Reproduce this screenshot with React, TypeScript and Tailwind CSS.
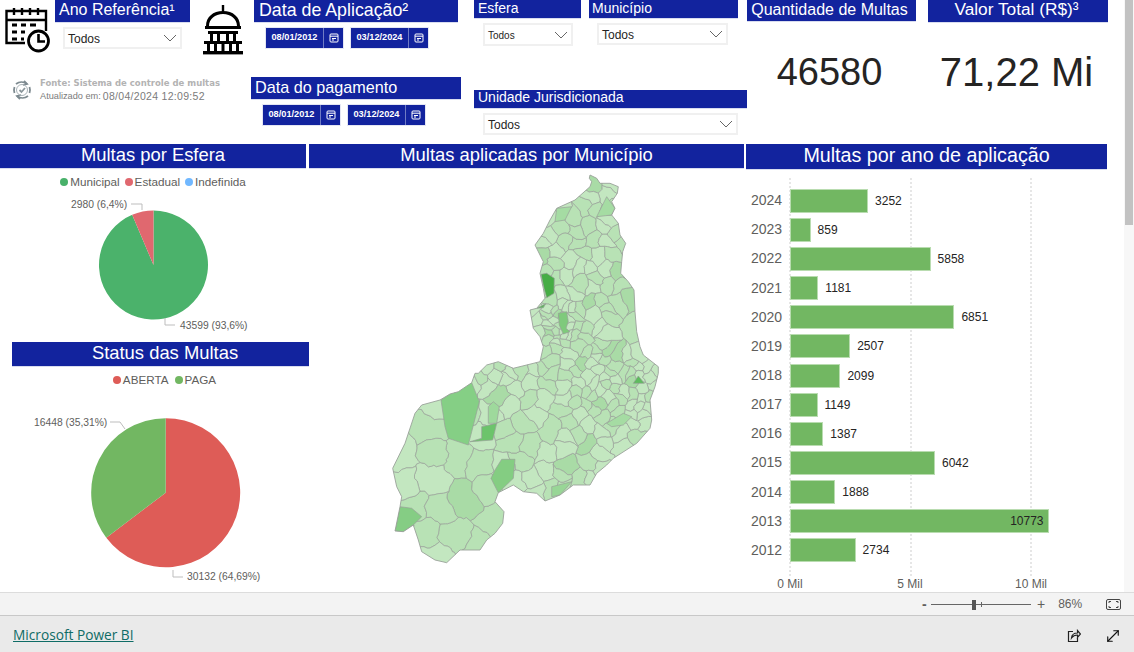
import { MoveDiagonal } from "lucide-react";

type Pt = [number, number];

const years = [
  [2024, 3252], [2023, 859], [2022, 5858], [2021, 1181], [2020, 6851], [2019, 2507], [2018, 2099],
  [2017, 1149], [2016, 1387], [2015, 6042], [2014, 1888], [2013, 10773], [2012, 2734],
];

// map outline traced from the picture, in two crops at 3x
const z4 = (p: number[][]): Pt[] => p.map(([x, y]) => [380 + x / 3, 165 + y / 3]);
const z5 = (p: number[][]): Pt[] => p.map(([x, y]) => [380 + x / 3, 370 + y / 3]);

const outline: Pt[] = [
  ...z4([[630, 30], [650, 40], [660, 55], [690, 55], [715, 65], [712, 85], [695, 110], [705, 130], [695, 150], [715, 175], [720, 210], [737, 235], [728, 260], [725, 290], [722, 325], [745, 350], [762, 375], [765, 440], [770, 500], [780, 545], [790, 570], [835, 605]]),
  ...z5([[835, 10], [825, 50], [810, 90], [815, 150], [810, 175], [770, 220], [700, 265], [680, 285], [650, 310], [630, 345], [580, 345], [540, 375], [495, 393], [470, 370], [430, 365], [400, 345], [355, 368], [345, 395], [372, 425], [368, 460], [345, 490], [320, 510], [300, 540], [240, 540], [200, 578], [165, 570], [125, 545], [115, 510], [100, 465], [70, 485], [45, 483], [60, 410], [65, 380], [50, 350], [38, 295], [75, 220], [105, 130], [125, 105], [180, 90], [210, 72], [235, 65], [275, 38], [285, 10]]),
  ...z4([[295, 625], [320, 600], [355, 590], [400, 610], [480, 590], [490, 545], [480, 515], [460, 490], [450, 435], [470, 430], [495, 400], [490, 370], [480, 325], [490, 290], [465, 240], [490, 205], [510, 165], [530, 130], [585, 105], [630, 65], [635, 50], [628, 40]]),
];

const highlights: { color: string; pts: Pt[] }[] = [
  { color: "#46ad45", pts: z4([[483, 328], [500, 325], [523, 340], [522, 385], [500, 398], [492, 370]]) },
  { color: "#5cb75b", pts: z4([[470, 430], [497, 416], [490, 428]]) },
  { color: "#7fca7c", pts: z4([[535, 445], [560, 440], [565, 470], [558, 490], [570, 500], [550, 507], [538, 480]]) },
  { color: "#a5dca3", pts: z4([[650, 155], [680, 95], [705, 130], [695, 150]]) },
  { color: "#a5dca3", pts: z4([[530, 130], [575, 125], [555, 165], [525, 170]]) },
  { color: "#85cf85", pts: z5([[183, 90], [210, 72], [275, 38], [298, 95], [265, 225], [205, 205], [195, 170]]) },
  { color: "#6cc46b", pts: z5([[305, 170], [350, 160], [338, 210], [270, 215], [305, 205]]) },
  { color: "#84cd82", pts: z5([[345, 300], [365, 268], [405, 268], [400, 325], [355, 368], [333, 325]]) },
  { color: "#85cd84", pts: z5([[60, 410], [95, 415], [125, 440], [100, 465], [70, 485], [45, 483]]) },
  { color: "#5fbc5f", pts: z5([[760, 40], [775, 18], [793, 40]]) },
  { color: "#9ed99c", pts: z5([[325, 110], [340, 95], [358, 110], [350, 160], [325, 160]]) },
  { color: "#a5dca3", pts: z5([[680, 160], [730, 130], [755, 140], [730, 165], [695, 170]]) },
  { color: "#98d696", pts: z5([[515, 350], [575, 335], [540, 375], [515, 380]]) },
];

function rng(seed: number) {
  return () => {
    seed = (seed + 0x6d2b79f5) | 0;
    let t = Math.imul(seed ^ (seed >>> 15), 1 | seed);
    t = (t + Math.imul(t ^ (t >>> 7), 61 | t)) ^ t;
    return ((t ^ (t >>> 14)) >>> 0) / 4294967296;
  };
}

function inside([x, y]: Pt, poly: Pt[]) {
  let hit = false;
  for (let i = 0, j = poly.length - 1; i < poly.length; j = i++) {
    const [xi, yi] = poly[i];
    const [xj, yj] = poly[j];
    if (yi > y !== yj > y && x < ((xj - xi) * (y - yi)) / (yj - yi) + xi) hit = !hit;
  }
  return hit;
}

// how far apart the municipalities sit in each part of the state
function spacing(x: number, y: number) {
  if (x > 545 && x < 575 && y > 305 && y < 345) return 5;
  if (x > 590 && y > 355 && y < 415) return 7;
  if (x < 500 && y > 385) return 24;
  if (x < 560 && y > 385) return 14;
  if (y < 300) return 10.5;
  if (x > 610 && y < 350) return 19;
  if (y > 415) return 11;
  return 9;
}

function clip(poly: Pt[], a: Pt, b: Pt) {
  const out: Pt[] = [];
  const d = (p: Pt) => (p[0] - a[0]) ** 2 + (p[1] - a[1]) ** 2 - (p[0] - b[0]) ** 2 - (p[1] - b[1]) ** 2;
  for (let i = 0; i < poly.length; i++) {
    const p = poly[i];
    const q = poly[(i + 1) % poly.length];
    const dp = d(p);
    const dq = d(q);
    if (dp <= 0) out.push(p);
    if (dp < 0 !== dq < 0) {
      const t = dp / (dp - dq);
      out.push([p[0] + (q[0] - p[0]) * t, p[1] + (q[1] - p[1]) * t]);
    }
  }
  return out;
}

// bends the straight cell edges so they read as borders; neighbours stay in step
function warp([x, y]: Pt): Pt {
  return [
    x + 1.8 * Math.sin(y * 0.21 + x * 0.07) + 1.1 * Math.sin(y * 0.53 - x * 0.31),
    y + 1.8 * Math.sin(x * 0.19 - y * 0.09) + 1.1 * Math.sin(x * 0.47 + y * 0.37),
  ];
}

function bend(poly: Pt[]) {
  const out: Pt[] = [];
  poly.forEach((p, i) => {
    const q = poly[(i + 1) % poly.length];
    const steps = Math.max(1, Math.round(Math.hypot(q[0] - p[0], q[1] - p[1]) / 4));
    for (let s = 0; s < steps; s++) {
      out.push(warp([p[0] + ((q[0] - p[0]) * s) / steps, p[1] + ((q[1] - p[1]) * s) / steps]));
    }
  });
  return out;
}

function buildCells() {
  const r = rng(41);
  const seeds: Pt[] = [];
  for (let i = 0; i < 9000; i++) {
    const p: Pt = [385 + r() * 280, 170 + r() * 400];
    if (!inside(p, outline)) continue;
    const min = spacing(p[0], p[1]);
    if (seeds.every((s) => Math.hypot(s[0] - p[0], s[1] - p[1]) > min)) seeds.push(p);
  }
  const box: Pt[] = [[380, 165], [680, 165], [680, 590], [380, 590]];
  return seeds.map((s) => {
    let cell = box;
    for (const o of seeds) if (o !== s) cell = clip(cell, s, o);
    const v = r();
    return { pts: bend(cell), color: v < 0.5 ? "#c3e7c0" : v < 0.93 ? "#b8e2b5" : "#a9dba6" };
  });
}

const cells = buildCells();
const str = (p: Pt[]) => p.map(([x, y]) => `${x.toFixed(1)},${y.toFixed(1)}`).join(" ");

function slice(cx: number, cy: number, r: number, from: number, to: number) {
  const at = (f: number) => [cx + r * Math.sin(f * 2 * Math.PI), cy - r * Math.cos(f * 2 * Math.PI)];
  const [x1, y1] = at(from);
  const [x2, y2] = at(to);
  return `M${cx} ${cy}L${x1} ${y1}A${r} ${r} 0 ${to - from > 0.5 ? 1 : 0} 1 ${x2} ${y2}Z`;
}

function Title({ children, className }: { children: React.ReactNode; className: string }) {
  return (
    <div className={`flex items-center bg-[#12239e] pb-[2px] text-white border-b border-[#d8dcef] ${className}`}>
      {children}
    </div>
  );
}

function Chevron() {
  return (
    <svg width="14" height="8" viewBox="0 0 14 8" className="shrink-0">
      <polyline points="1,1 7,7 13,1" fill="none" stroke="#666" strokeWidth="1" />
    </svg>
  );
}

function Dropdown({ className, size }: { className: string; size: string }) {
  return (
    <div className={`flex items-center justify-between border-2 border-[#f0f0f0] bg-white pl-[3px] pr-[3px] text-[#252423] ${size} ${className}`}>
      <span className="pt-[1px]">Todos</span>
      <Chevron />
    </div>
  );
}

function DateBox({ value }: { value: string }) {
  return (
    <div className="flex h-[22px] w-[79px] bg-[#12239e] text-white border border-[#e4e6f3]">
      <div className="flex w-[57px] items-center justify-center text-[9.2px] font-bold">{value}</div>
      <div className="flex flex-1 items-center justify-center border-l border-[#6f7bc4]">
        <svg width="10" height="10" viewBox="0 0 10 10" fill="none" stroke="#fff" strokeWidth="1">
          <rect x="1" y="1" width="8" height="8" rx="1" />
          <path d="M1 3.2h8M3 5.5h4M3 7h2" />
        </svg>
      </div>
    </div>
  );
}

function CalendarIcon() {
  return (
    <svg width="46" height="46" viewBox="0 0 46 46" className="shrink-0" fill="none" stroke="#000" strokeWidth="2.4">
      <path d="M20 36H1.5V4H41V24" />
      <path d="M1.5 13H41" />
      <path d="M9 1v7M17 1v7M25 1v7M33 1v7" />
      <path d="M7 18h5M16 18h5M25 18h6M7 25h5M16 25h4M7 32h5M16 32h3" strokeWidth="3" />
      <circle cx="33.5" cy="34" r="10" fill="#fff" strokeWidth="2.8" />
      <path d="M33.5 27v7.5H40" strokeWidth="2.6" />
    </svg>
  );
}

function BuildingIcon() {
  return (
    <svg width="40" height="50" viewBox="0 0 40 50" className="shrink-0" fill="#000">
      <rect x="18.8" y="0" width="2.4" height="6" />
      <path d="M3 21C3 12 10 6 20 6s17 6 17 15h-3C34 14 28 9 20 9S6 14 6 21Z" />
      <rect x="2" y="21" width="36" height="3" />
      <rect x="5" y="26" width="30" height="3" />
      <path d="M7 29h3v7H7zM14 29h3v7h-3zM23 29h3v7h-3zM30 29h3v7h-3z" />
      <rect x="1" y="36" width="38" height="3" />
      <path d="M4 39h3v7H4zM11 39h3v7h-3zM18.5 39h3v7h-3zM26 39h3v7h-3zM33 39h3v7h-3z" />
      <rect x="0" y="46" width="40" height="3.4" />
    </svg>
  );
}

function SyncIcon() {
  return (
    <svg width="20" height="22" viewBox="0 0 20 22" className="shrink-0" fill="none" stroke="#7d8a90" strokeWidth="1.8">
      <path d="M4 5a9 9 0 0 1 11 0M16 17a9 9 0 0 1-11 0M2.5 8a9 9 0 0 0 0 6M17.5 8a9 9 0 0 1 0 6" />
      <path d="M12 2l3 3-4 1M8 20l-3-3 4-1" />
      <circle cx="10" cy="11" r="5.5" strokeWidth="1" stroke="#a9b3b8" />
      <path d="M7.5 11l2 2 3.5-4" stroke="#8b979c" />
    </svg>
  );
}

function Legend({ items, className }: { items: [string, string][]; className: string }) {
  return (
    <div className={`flex justify-center text-[11.7px] leading-none text-[#605e5c] ${className}`}>
      {items.map(([name, color]) => (
        <span key={name} className="flex items-center gap-[2px]">
          <span className="h-[8px] w-[8px] rounded-full" style={{ background: color }} />
          {name}
        </span>
      ))}
    </div>
  );
}

function Header() {
  return (
    <div className="flex h-[144px] shrink-0">
      <div className="w-[251px] shrink-0">
        <div className="flex">
          <div className="ml-[5px] mt-[7px]">
            <CalendarIcon />
          </div>
          <div className="ml-[4px] w-[135px]">
            <Title className="h-[23px] pl-[4px] text-[16px]">Ano Referência¹</Title>
            <Dropdown className="ml-[8px] mt-[4px] h-[22px] w-[119px]" size="text-[12px]" />
          </div>
          <div className="ml-[13px] mt-[5px]">
            <BuildingIcon />
          </div>
        </div>
        <div className="ml-[12px] mt-[21px] flex items-center gap-[8px]">
          <SyncIcon />
          <div>
            <div className="text-[8.5px] font-bold leading-[14px] text-[#b3b3b3] font-['DejaVu_Sans',sans-serif]">
              Fonte: Sistema de controle de multas
            </div>
            <div className="flex items-center gap-[2px] leading-[13px] text-[#7b7b7b]">
              <span className="text-[9.2px]">Atualizado em:</span>
              <span className="text-[10.5px] tracking-[0.3px]">08/04/2024 12:09:52</span>
            </div>
          </div>
        </div>
      </div>

      <div className="w-[223px] shrink-0">
        <Title className="ml-[3px] h-[23px] w-[204px] pl-[5px] text-[17.8px]">Data de Aplicação²</Title>
        <div className="ml-[14px] mt-[4px] flex gap-[6px]">
          <DateBox value="08/01/2012" />
          <DateBox value="03/12/2024" />
        </div>
        <Title className="mt-[28px] h-[23px] w-[210px] pl-[4px] text-[16.2px]">Data do pagamento</Title>
        <div className="ml-[11px] mt-[4px] flex gap-[6px]">
          <DateBox value="08/01/2012" />
          <DateBox value="03/12/2024" />
        </div>
      </div>

      <div className="w-[273px] shrink-0">
        <div className="flex h-[90px] gap-[8px]">
          <div className="w-[107px]">
            <Title className="h-[19px] !items-start pl-[4px] text-[14px] leading-[16px]">Esfera</Title>
            <Dropdown className="ml-[9px] mt-[4px] h-[23px] w-[90px]" size="text-[10px]" />
          </div>
          <div className="w-[149px]">
            <Title className="h-[19px] !items-start pl-[3px] text-[14px] leading-[16px]">Município</Title>
            <Dropdown className="ml-[8px] mt-[4px] h-[22px] w-[131px]" size="text-[12px]" />
          </div>
        </div>
        <Title className="h-[19px] !items-start pl-[4px] text-[14px] leading-[15px]">Unidade Jurisdicionada</Title>
        <Dropdown className="ml-[9px] mt-[4px] h-[22px] w-[255px]" size="text-[12px]" />
      </div>

      <div className="flex">
        <div className="w-[169px] shrink-0 text-center">
          <Title className="h-[22px] justify-center pr-[4px] text-[16px]">Quantidade de Multas</Title>
          <div className="mt-[27px] pr-[4px] text-[38px] leading-[46px] text-[#252423]">46580</div>
        </div>
        <div className="ml-[12px] w-[180px] shrink-0 text-center">
          <Title className="h-[23px] justify-center pr-[3px] text-[17.3px]">Valor Total (R$)³</Title>
          <div className="mt-[26px] pr-[3px] text-[40px] leading-[46px] text-[#252423]">71,22 Mi</div>
        </div>
      </div>
    </div>
  );
}

function LeftColumn() {
  return (
    <div className="w-[309px] shrink-0">
      <Title className="h-[25px] w-[306px] justify-center text-[18.4px]">Multas por Esfera</Title>
      <Legend
        className="mt-[8px] mr-[3px] h-[10px] gap-[5px]"
        items={[["Municipal", "#48b16a"], ["Estadual", "#e0686f"], ["Indefinida", "#71b8ff"]]}
      />
      <svg width="309" height="155" viewBox="0 187 309 155" className="block">
        <path d={slice(153.5, 265, 54.5, 0, 0.936)} fill="#4bb26b" />
        <path d={slice(153.5, 265, 54.5, 0.936, 1)} fill="#e0686f" />
        <path d="M131 204h11v6M165 318v7h10" fill="none" stroke="#bdbdbd" />
        <text x="71" y="208" fontSize="10.3" fill="#605e5c">2980 (6,4%)</text>
        <text x="180" y="329" fontSize="10.3" fill="#605e5c">43599 (93,6%)</text>
      </svg>
      <Title className="ml-[12px] h-[25px] w-[297px] justify-center pl-[9px] text-[18.4px]">Status das Multas</Title>
      <Legend
        className="ml-[20px] mt-[8px] h-[10px] gap-[6px]"
        items={[["ABERTA", "#de5c57"], ["PAGA", "#72b762"]]}
      />
      <svg width="309" height="207" viewBox="0 385 309 207" className="block">
        <path d={slice(165.7, 492.7, 74.5, 0, 0.6469)} fill="#de5c57" />
        <path d={slice(165.7, 492.7, 74.5, 0.6469, 1)} fill="#72b762" />
        <path d="M110 422h10l5 7M173 570v7h10" fill="none" stroke="#bdbdbd" />
        <text x="34" y="426" fontSize="10.3" fill="#605e5c">16448 (35,31%)</text>
        <text x="187" y="580" fontSize="10.3" fill="#605e5c">30132 (64,69%)</text>
      </svg>
    </div>
  );
}

function MapColumn() {
  return (
    <div className="w-[437px] shrink-0">
      <Title className="h-[25px] w-[435px] justify-center text-[18.4px]">Multas aplicadas por Município</Title>
      <svg width="435" height="423" viewBox="309 169 435 423" className="block blur-[0.3px]">
        <defs>
          <clipPath id="state">
            <polygon points={str(outline)} />
          </clipPath>
        </defs>
        <g clipPath="url(#state)" stroke="#9aa19a" strokeWidth="0.7">
          {cells.map((c, i) => (
            <polygon key={i} points={str(c.pts)} fill={c.color} />
          ))}
          {highlights.map((h, i) => (
            <polygon key={i} points={str(h.pts)} fill={h.color} />
          ))}
        </g>
        <polygon points={str(outline)} fill="none" stroke="#9aa19a" strokeWidth="0.9" />
      </svg>
    </div>
  );
}

function BarColumn() {
  return (
    <div className="relative w-[361px] shrink-0">
      <Title className="h-[26px] justify-center text-[19.7px]">Multas por ano de aplicação</Title>
      <div className="absolute left-[43px] top-[34px] h-[398px] border-l-2 border-dotted border-[#e6e6e6]" />
      <div className="absolute left-[164px] top-[34px] h-[398px] border-l-2 border-dotted border-[#e6e6e6]" />
      <div className="absolute left-[284px] top-[34px] h-[398px] border-l-2 border-dotted border-[#e6e6e6]" />
      <div className="relative mt-[16px]">
        {years.map(([year, value]) => {
          const width = value * 0.024;
          const inner = value > 10000;
          return (
            <div key={year} className="flex h-[29.17px] items-center">
              <span className="w-[44px] shrink-0 pl-[5px] text-[14px] text-[#605e5c]">{year}</span>
              <div
                className="flex h-[24px] items-center justify-end border border-[#b9dcb0] bg-[#72b762] pr-[4px] text-[12px] text-[#252423]"
                style={{ width }}
              >
                {inner ? value : null}
              </div>
              {!inner && <span className="ml-[7px] text-[12px] text-[#252423]">{value}</span>}
            </div>
          );
        })}
      </div>
      <div className="relative mt-[12px] h-[14px] text-[12px] leading-[14px] text-[#605e5c]">
        <span className="absolute left-[44px] -translate-x-1/2">0 Mil</span>
        <span className="absolute left-[164px] -translate-x-1/2">5 Mil</span>
        <span className="absolute left-[285px] -translate-x-1/2">10 Mil</span>
      </div>
    </div>
  );
}

function ZoomBar() {
  return (
    <div className="flex h-[23px] items-center border-t border-[#dcdcdc] bg-[#f3f3f3] pl-[922px] text-[#605e5c]">
      <span className="w-[9px] text-[14px] font-bold leading-none">-</span>
      <div className="relative h-px w-[100px] bg-[#666]">
        <div className="absolute left-[41px] top-[-4px] h-[10px] w-[4px] bg-[#555]" />
        <div className="absolute left-[50px] top-[-2px] h-[5px] w-px bg-[#666]" />
      </div>
      <span className="ml-[6px] text-[14px] leading-none">+</span>
      <span className="ml-[13px] text-[12px]">86%</span>
      <svg width="15" height="11" viewBox="0 0 15 11" fill="none" stroke="#444" className="ml-[24px]">
        <rect x="0.5" y="0.5" width="14" height="10" rx="1.5" />
        <path d="M3 4V2.5h2M10 2.5h2V4M12 7v1.5h-2M5 8.5H3V7" />
      </svg>
    </div>
  );
}

function BottomBar() {
  return (
    <div className="flex h-[37px] items-center border-t border-[#c8c8c8] bg-[#eaeaea] pl-[13px] pr-[12px] pt-[3px]">
      <a className="text-[13.7px] text-[#0f6c66] underline font-['Open_Sans',sans-serif]">Microsoft Power BI</a>
      <svg width="14" height="14" viewBox="0 0 14 14" fill="none" stroke="#222" strokeWidth="1.2" className="ml-auto">
        <path d="M6 2.5H1.5v10h9V9" />
        <path d="M4.5 9c.3-3 2.5-5 6-5V1.5L13.5 5l-3 3.5V6c-2.5 0-4.6 1-6 3Z" />
      </svg>
      <MoveDiagonal size={18} strokeWidth={1.5} color="#111" className="ml-[23px]" />
    </div>
  );
}

export default function App() {
  return (
    <div className="flex h-[652px] w-[1134px] flex-col overflow-hidden bg-white font-['Liberation_Sans',Arial,sans-serif]">
      <div className="flex h-[592px] shrink-0">
        <div className="w-[1124px] shrink-0">
          <Header />
          <div className="flex">
            <LeftColumn />
            <MapColumn />
            <BarColumn />
          </div>
        </div>
        <div className="flex-1 bg-[#f7f7f7]">
          <div className="ml-[1px] h-[225px] w-[8px] bg-[#c2c2c2]" />
        </div>
      </div>
      <ZoomBar />
      <BottomBar />
    </div>
  );
}
